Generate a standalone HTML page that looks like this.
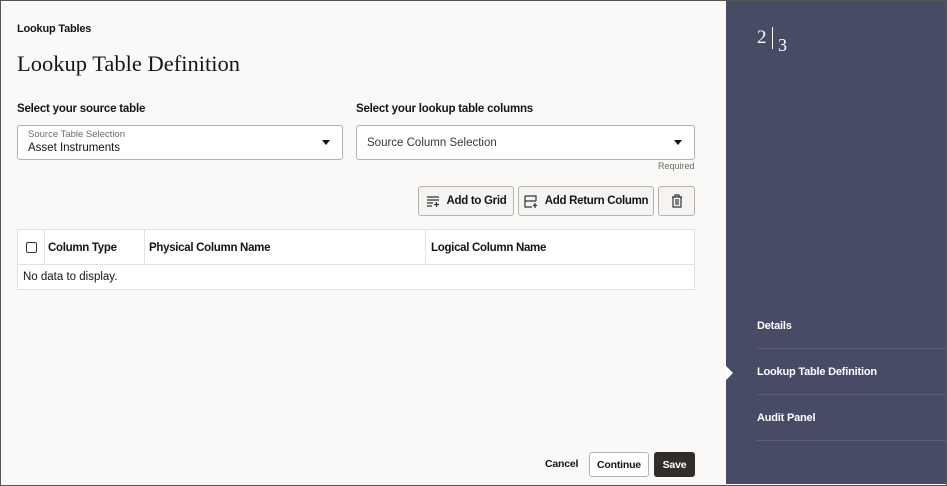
<!DOCTYPE html>
<html><head><meta charset="utf-8"><style>
*{box-sizing:border-box;margin:0;padding:0}
body{width:947px;height:486px;overflow:hidden;font-family:"Liberation Sans",sans-serif;color:#161513;background:#fff;position:relative}
.frame{position:absolute;left:0;top:0;width:947px;height:486px;border:1px solid #555;background:#faf9f8}
.main{position:absolute;left:1px;top:1px;width:725px;height:483px;background:#faf9f8}
.side{position:absolute;left:726px;top:1px;width:220px;height:483px;background:#474b66;color:#fff}
.abs{position:absolute;white-space:nowrap}
.b{font-weight:bold;letter-spacing:-0.2px}
.field{position:absolute;background:#fff;border:1px solid #b5b2ad;border-radius:3px}
.caret{position:absolute;width:0;height:0;border-left:4px solid transparent;border-right:4px solid transparent;border-top:5px solid #161513}
.btn{position:absolute;height:30px;border:1px solid #b5b2ad;border-radius:3px;background:#f5f4f2;font-size:11.5px;font-weight:bold;letter-spacing:-0.3px;display:flex;align-items:center;justify-content:center;gap:7px;white-space:nowrap}
.th{position:absolute;top:0;height:35px;display:flex;align-items:center;font-size:11.5px;font-weight:bold;letter-spacing:-0.3px;border-right:1px solid #e4e2df;white-space:nowrap}
.step{position:absolute;left:31px;font-size:11px;font-weight:bold;letter-spacing:-0.2px;white-space:nowrap}
.line{position:absolute;left:31px;right:0;height:1px;background:#5a5e78}
</style></head><body>
<div class="frame"></div>
<div class="main">
 <div class="abs b" style="left:16px;top:22px;font-size:11px">Lookup Tables</div>
 <div class="abs" style="left:16px;top:50px;font-family:'Liberation Serif',serif;font-size:22.5px">Lookup Table Definition</div>
 <div class="abs b" style="left:16px;top:102px;font-size:11.5px">Select your source table</div>
 <div class="abs b" style="left:355px;top:102px;font-size:11.5px">Select your lookup table columns</div>
 <div class="field" style="left:16px;top:124px;width:326px;height:35px">
  <div class="abs" style="left:10px;top:3px;font-size:9.5px;color:#6f6c68">Source Table Selection</div>
  <div class="abs" style="left:10px;top:16px;font-size:11.5px">Asset Instruments</div>
  <div class="caret" style="left:304px;top:14px"></div>
 </div>
 <div class="field" style="left:355px;top:124px;width:339px;height:35px">
  <div class="abs" style="left:10px;top:11px;font-size:11.5px;color:#3a3836">Source Column Selection</div>
  <div class="caret" style="left:317px;top:14px"></div>
 </div>
 <div class="abs" style="left:657px;top:160px;font-size:9px;color:#6f6c68">Required</div>
 <div class="btn" style="left:417px;top:185px;width:96px">
  <svg width="14" height="12" viewBox="0 0 14 12" fill="none" stroke="#333" stroke-width="1.2"><path d="M1 2h12M1 5h12M1 8h6M1 11h5M10.5 7v5M8 9.5h5"/></svg>Add to Grid</div>
 <div class="btn" style="left:517px;top:185px;width:136px">
  <svg width="14" height="13" viewBox="0 0 14 13" fill="none" stroke="#333" stroke-width="1.2"><path d="M1 1h11v5M1 1v11h7M1 6h11M11 8v5M9 10.5h4"/></svg>Add Return Column</div>
 <div class="btn" style="left:657px;top:185px;width:37px">
  <svg width="12" height="14" viewBox="0 0 12 14" fill="none" stroke="#333" stroke-width="1.2"><path d="M1 3h10M4 3V1h4v2M2 3v10h8V3M5 5v6M7 5v6"/></svg></div>
 <div class="abs" style="left:16px;top:228px;width:678px;height:61px;background:#fff;border:1px solid #e4e2df">
  <div class="th" style="left:0;width:27px;justify-content:center"><div style="width:11px;height:11px;border:1.3px solid #333;border-radius:2px"></div></div>
  <div class="th" style="left:27px;width:100px;padding-left:3px">Column Type</div>
  <div class="th" style="left:127px;width:281px;padding-left:4px">Physical Column Name</div>
  <div class="th" style="left:408px;width:268px;padding-left:5px;border-right:none">Logical Column Name</div>
  <div class="abs" style="left:0;top:34px;width:676px;height:1px;background:#e4e2df"></div>
  <div class="abs" style="left:5px;top:41px;font-size:11.5px">No data to display.</div>
 </div>
 <div class="abs b" style="left:544px;top:457px;font-size:10.5px">Cancel</div>
 <div class="abs b" style="left:588px;top:451px;width:60px;height:25px;border:1px solid #b5b2ad;border-radius:3px;background:#fff;font-size:10.5px;display:flex;align-items:center;justify-content:center">Continue</div>
 <div class="abs b" style="left:653px;top:451px;width:41px;height:25px;border-radius:3px;background:#312d2a;color:#fff;font-size:10.5px;display:flex;align-items:center;justify-content:center">Save</div>
</div>
<div class="side">
 <div class="abs" style="left:31px;top:26px;font-family:'Liberation Serif',serif;font-size:19px">2</div>
 <div class="abs" style="left:46px;top:26px;width:1px;height:22px;background:#fff"></div>
 <div class="abs" style="left:52px;top:34px;font-family:'Liberation Serif',serif;font-size:18px">3</div>
 <div class="step" style="top:319px">Details</div>
 <div class="line" style="top:347px"></div>
 <div class="abs" style="left:0;top:365px;width:0;height:0;border-top:7px solid transparent;border-bottom:7px solid transparent;border-left:7px solid #fff"></div>
 <div class="step" style="top:365px">Lookup Table Definition</div>
 <div class="line" style="top:393px"></div>
 <div class="step" style="top:411px">Audit Panel</div>
 <div class="line" style="top:439px"></div>
</div>
</body></html>
